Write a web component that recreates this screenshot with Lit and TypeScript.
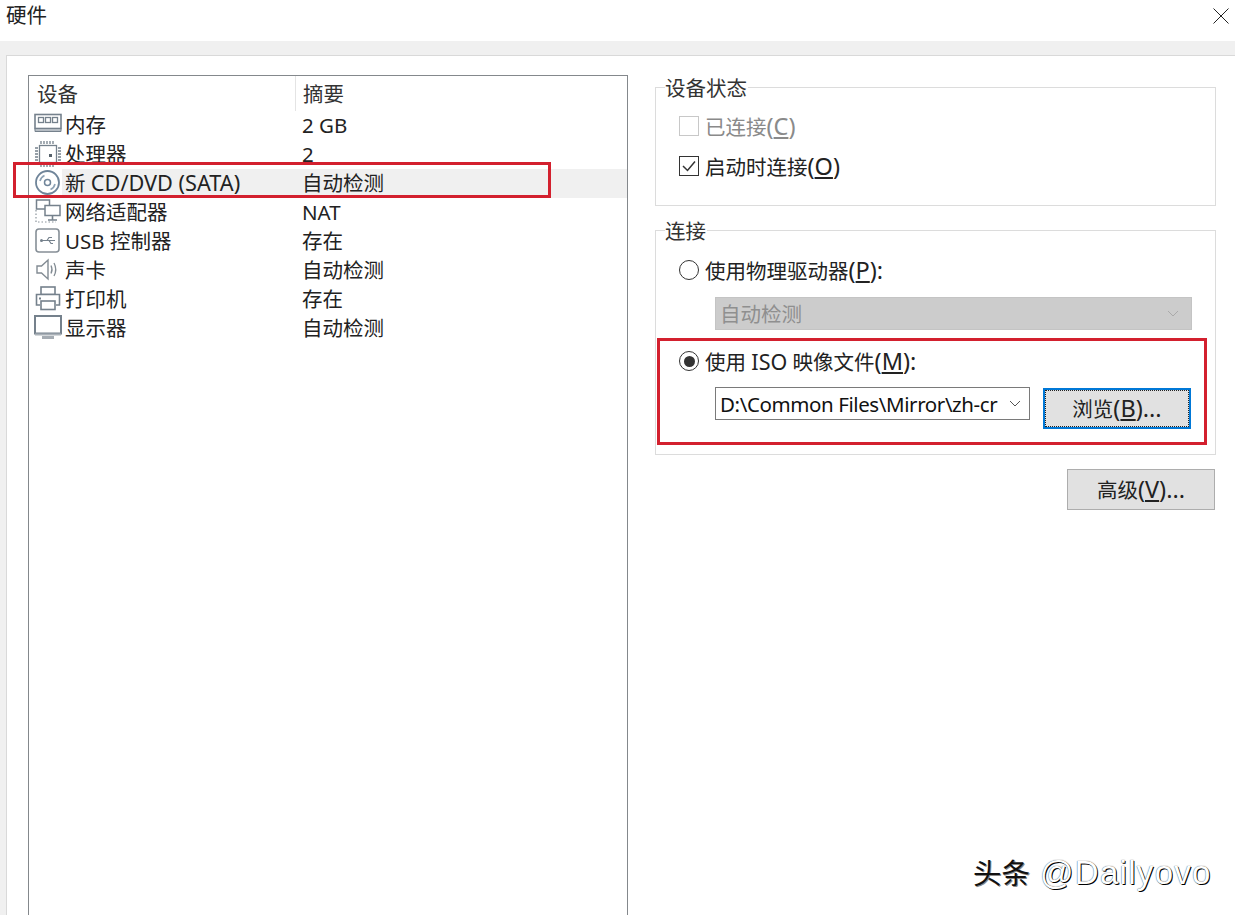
import { LitElement, html, css, svg } from "lit";
import { customElement } from "lit/decorators.js";

const ICON_COLOR = "#75818c";

const icons: Record<string, unknown> = {
  memory: svg`<rect x="1" y="2.500" width="26" height="14" fill="#fff" stroke="${ICON_COLOR}" stroke-width="1.600"/>
    <path d="M1 16.500h26v3H1z" fill="#b5bcc3" stroke="${ICON_COLOR}" stroke-width="1"/>
    <rect x="4.500" y="5.500" width="5" height="5" fill="none" stroke="${ICON_COLOR}" stroke-width="1.300"/>
    <rect x="11.500" y="5.500" width="5" height="5" fill="none" stroke="${ICON_COLOR}" stroke-width="1.300"/>
    <rect x="18.500" y="5.500" width="5" height="5" fill="none" stroke="${ICON_COLOR}" stroke-width="1.300"/>`,
  cpu: svg`<rect x="5.500" y="4.500" width="17" height="17" fill="#fff" stroke="${ICON_COLOR}" stroke-width="1.300"/>
    <path d="M7 0v3M10 0v3M13 0v3M16 0v3M19 0v3M7 23v3M10 23v3M13 23v3M16 23v3M19 23v3M1 7h3M1 10h3M1 13h3M1 16h3M1 19h3M24 7h3M24 10h3M24 13h3M24 16h3M24 19h3" stroke="${ICON_COLOR}" stroke-width="1.300" fill="none"/>
    <rect x="15" y="13" width="3" height="3" fill="#56616b"/>`,
  cd: svg`<circle cx="13.500" cy="12.500" r="11.500" fill="#fff" stroke="#6f8499" stroke-width="1.800"/>
    <circle cx="13.500" cy="12.500" r="3" fill="none" stroke="#6f8499" stroke-width="1.500"/>
    <path d="M6 11a8 8 0 0 1 4.500-5.500M21 14a8 8 0 0 1-4.500 5.500" fill="none" stroke="#8ea2b5" stroke-width="1.600"/>`,
  network: svg`<path d="M2 11v12h20" fill="none" stroke="#8b949c" stroke-width="1.200" stroke-dasharray="1.500 2"/>
    <rect x="2.500" y="1" width="13" height="9" fill="#fff" stroke="${ICON_COLOR}" stroke-width="1.500"/>
    <rect x="11" y="6.500" width="15" height="10" fill="#fff" stroke="${ICON_COLOR}" stroke-width="1.500"/>
    <path d="M18.500 16.500v4M14 21h9" stroke="${ICON_COLOR}" stroke-width="1.600" fill="none"/>`,
  usb: svg`<rect x="2" y="1" width="23" height="23" rx="3" fill="#fff" stroke="#868f97" stroke-width="1.600"/>
    <path d="M7 12.500h14M13 12.500l2-3h3M15 12.500l2 3h2" fill="none" stroke="${ICON_COLOR}" stroke-width="1.200"/>
    <circle cx="7.500" cy="12.500" r="1.500" fill="${ICON_COLOR}"/>`,
  sound: svg`<path d="M3 9h4.500L14 3v19l-6.500-6H3z" fill="#fff" stroke="#828b93" stroke-width="1.400"/>
    <path d="M17 8.500q2 4 0 8M20 6q3.500 6.500 0 13" fill="none" stroke="#828b93" stroke-width="1.300"/>`,
  printer: svg`<rect x="7" y="1" width="14" height="7.500" fill="#fff" stroke="${ICON_COLOR}" stroke-width="1.600"/>
    <path d="M6 19H2.500V8.500h23V19H22" fill="#fff" stroke="${ICON_COLOR}" stroke-width="1.600"/>
    <rect x="7" y="15" width="14" height="8.500" fill="#fff" stroke="${ICON_COLOR}" stroke-width="1.600"/>
    <rect x="5" y="11.500" width="2" height="2" fill="${ICON_COLOR}"/>`,
  display: svg`<rect x="1" y="1" width="26" height="17.500" fill="#fff" stroke="${ICON_COLOR}" stroke-width="2"/>
    <rect x="1" y="18.500" width="26" height="2" fill="#aab1b8"/>
    <rect x="8" y="21" width="12" height="3" fill="#a5acb3"/>`,
};

const rows = [
  { icon: "memory", name: html`内存`, value: "2 GB" },
  { icon: "cpu", name: html`处理器`, value: "2" },
  { icon: "cd", name: html`新 <span class="wide">CD/DVD (SATA)</span>`, value: "自动检测", selected: true },
  { icon: "network", name: html`网络适配器`, value: "NAT" },
  { icon: "usb", name: html`USB 控制器`, value: "存在" },
  { icon: "sound", name: html`声卡`, value: "自动检测" },
  { icon: "printer", name: html`打印机`, value: "存在" },
  { icon: "display", name: html`显示器`, value: "自动检测" },
];

const chevron = svg`<path d="M1 1l5 5 5-5" fill="none" stroke="currentColor" stroke-width="1"/>`;

@customElement("app-root")
export class AppRoot extends LitElement {
  static styles = css`
    :host {
      display: block;
      position: relative;
      width: 1235px;
      height: 915px;
      overflow: hidden;
      background: #fff;
      color: #222;
      font-family: "Noto Sans", "Noto Sans CJK SC", sans-serif;
      font-size: 20.5px;
      line-height: 28px;
    }
    .titlebar {
      height: 41px;
      display: flex;
      align-items: center;
      justify-content: space-between;
      padding: 0 6px 12px;
      box-sizing: border-box;
    }
    .titlebar .close { width: 16px; height: 16px; margin-top: 3px; }
    .band { height: 14px; background: #f0f0f0; }
    .body {
      display: flex;
      height: 860px;
      background: #f0f0f0;
      padding-left: 6px;
    }
    .panel {
      flex: 1;
      display: flex;
      background: #fff;
      border-top: 1px solid #d9d9d9;
      border-left: 1px solid #d9d9d9;
      padding: 19px 19px 0 21px;
    }
    .list {
      width: 600px;
      height: 900px;
      flex: none;
      box-sizing: border-box;
      border: 1px solid #84888c;
      display: flex;
      flex-direction: column;
    }
    .head {
      height: 35px;
      display: grid;
      grid-template-columns: 266px 1fr;
      align-items: center;
      color: #333;
    }
    .head span { padding-left: 8px; }
    .head span + span { border-left: 1px solid #e4e4e4; padding-left: 7px; height: 35px; line-height: 37px; }
    .row {
      height: 29px;
      box-sizing: border-box;
      padding-bottom: 1px;
      display: grid;
      grid-template-columns: 266px 1fr;
      align-items: center;
      white-space: nowrap;
    }
    .cell-name { display: flex; align-items: center; padding-left: 5px; height: 28px; }
    .cell-name svg { width: 28px; height: 26px; flex: none; }
    .cell-name > span { margin-left: 2px; padding-left: 1px; }
    .wide { font-size: 21.7px; }
    .cell-value { padding-left: 7px; height: 28px; }
    .row.sel { background: linear-gradient(to right, #fff 33px, #f0f0f0 33px); }
    .side {
      margin-left: 27px;
      flex: 1;
      display: flex;
      flex-direction: column;
    }
    fieldset {
      margin: 0;
      padding: 0 0 0 23px;
      border: 1px solid #dcdcdc;
      min-width: 0;
    }
    legend {
      margin-left: -14px;
      padding: 2px 1px 0 0;
      color: #333;
    }
    .state { height: 134px; box-sizing: border-box; margin-top: -3px; margin-bottom: 9px; display: flex; flex-direction: column; }
    .conn { height: 240px; box-sizing: border-box; }
    .opt { display: flex; align-items: center; gap: 6px; height: 28px; white-space: nowrap; }
    .state .opt:first-of-type { margin-top: 10px; }
    .state .opt + .opt { margin-top: 12px; }
    .mn { font-size: 23.5px; }
    .disabled { color: #8a8a8a; }
    .box {
      width: 20px; height: 20px; box-sizing: border-box; flex: none;
      border: 1px solid #333; display: flex; align-items: center; justify-content: center;
    }
    .box.off { border-color: #c8c8c8; }
    .box svg { width: 16px; height: 14px; }
    .radio {
      width: 20px; height: 20px; box-sizing: border-box; flex: none; border-radius: 50%;
      border: 1px solid #333; display: flex; align-items: center; justify-content: center;
    }
    .radio i { width: 11px; height: 11px; border-radius: 50%; background: #333; }
    .indent { margin-left: 36px; }
    .select {
      height: 33px;
      box-sizing: border-box;
      display: flex;
      align-items: center;
      justify-content: space-between;
      padding: 0 8px 0 4px;
      white-space: nowrap;
    }
    .select svg { width: 12px; height: 7px; flex: none; }
    .select.dis { width: 477px; background: #cccccc; color: #8f8f8f; margin-top: 13px; border: 1px solid #c4c4c4; }
    .select.dis svg { color: #aaa; margin-right: 4px; }
    .select.iso { width: 315px; border: 1px solid #7a7a7a; color: #111; }
    .select.iso svg { color: #555; }
    .select.iso .v { letter-spacing: -0.4px; }
    .iso-row { display: flex; align-items: flex-start; gap: 13px; margin-top: 12px; }
    .btn {
      box-sizing: border-box;
      background: #e1e1e1;
      display: flex;
      align-items: center;
      justify-content: center;
      width: 148px;
      height: 41px;
      white-space: nowrap;
    }
    .btn.focus { border: 2px solid #0078d7; outline: 1px dotted #222; outline-offset: -3px; margin-top: 1px; }
    .btn.adv { border: 1px solid #adadad; margin-right: 1px; }
    .actions { display: flex; justify-content: flex-end; margin-top: 14px; }
    .radio-gap { margin-top: 17px; }
    .first-radio { margin-top: 11px; }
    .iso-word { font-size: 21.5px; }
    u { text-underline-offset: 2px; }
    .mark { position: absolute; border: 3px solid #d3202e; box-sizing: border-box; pointer-events: none; }
    .mark.a { left: 13px; top: 162px; width: 538px; height: 36px; }
    .mark.b { left: 657px; top: 338px; width: 550px; height: 107px; }
    .watermark {
      position: absolute;
      left: 973px;
      top: 852px;
      display: flex;
      align-items: baseline;
      gap: 10px;
      font-family: "Liberation Sans", "Noto Sans CJK SC", sans-serif;
      line-height: 42px;
      white-space: nowrap;
    }
    .watermark .cn { font-size: 28.5px; color: #111; text-shadow: 1px 1px 0 #888; }
    .watermark .en { font-size: 33px; letter-spacing: 1.3px; color: #fff; text-shadow: 1px 1px 0 #000, 0 0 1px #222; }
  `;

  render() {
    return html`
      <div class="titlebar">
        <span>硬件</span>
        <svg class="close" viewBox="0 0 16 16"><path d="M.5.5l15 15M15.500.5l-15 15" stroke="#222" stroke-width="1" fill="none"/></svg>
      </div>
      <div class="band"></div>
      <div class="body">
        <div class="panel">
          <div class="list">
            <div class="head"><span>设备</span><span>摘要</span></div>
            ${rows.map(
              (r) => html`<div class="row ${r.selected ? "sel" : ""}">
                <div class="cell-name"><svg viewBox="0 0 28 26">${icons[r.icon]}</svg><span>${r.name}</span></div>
                <div class="cell-value">${r.value}</div>
              </div>`
            )}
          </div>
          <div class="side">
            <fieldset class="state">
              <legend>设备状态</legend>
              <div class="opt disabled"><span class="box off"></span><span>已连接<span class="mn">(<u>C</u>)</span></span></div>
              <div class="opt"><span class="box"><svg viewBox="0 0 16 14"><path d="M2 7l4.500 4.500L14 2.500" fill="none" stroke="#333" stroke-width="1.500"/></svg></span><span>启动时连接<span class="mn">(<u>O</u>)</span></span></div>
            </fieldset>
            <fieldset class="conn">
              <legend>连接</legend>
              <div class="opt first-radio"><span class="radio"></span><span>使用物理驱动器<span class="mn">(<u>P</u>):</span></span></div>
              <div class="select dis indent"><span>自动检测</span><svg viewBox="0 0 12 7">${chevron}</svg></div>
              <div class="opt radio-gap"><span class="radio"><i></i></span><span>使用 <span class="iso-word">ISO</span> 映像文件<span class="mn">(<u>M</u>):</span></span></div>
              <div class="iso-row indent">
                <div class="select iso"><span class="v">D:\\Common Files\\Mirror\\zh-cr</span><svg viewBox="0 0 12 7">${chevron}</svg></div>
                <div class="btn focus"><span>浏览<span class="mn">(<u>B</u>)...</span></span></div>
              </div>
            </fieldset>
            <div class="actions"><div class="btn adv"><span>高级<span class="mn">(<u>V</u>)...</span></span></div></div>
          </div>
        </div>
      </div>
      <div class="mark a"></div>
      <div class="mark b"></div>
      <div class="watermark"><span class="cn">头条</span><span class="en">@Dailyovo</span></div>
    `;
  }
}
